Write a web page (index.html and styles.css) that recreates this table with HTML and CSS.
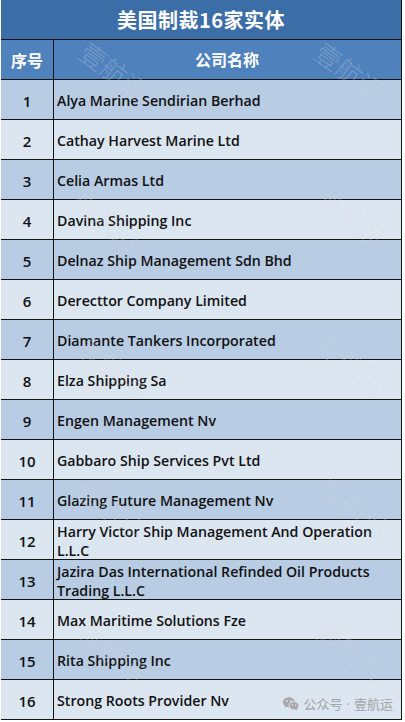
FILE: index.html
```html
<!DOCTYPE html>
<html lang="zh">
<head>
<meta charset="utf-8">
<link rel="stylesheet" href="styles.css">
</head>
<body>
<div class="page">
  <div class="sheet">
    <div class="title">美国制裁16家实体</div>
    <div class="row head"><div class="num">序号</div><div class="name">公司名称</div></div>
    <div class="row odd"><div class="num">1</div><div class="name">Alya Marine Sendirian Berhad</div></div>
    <div class="row even"><div class="num">2</div><div class="name">Cathay Harvest Marine Ltd</div></div>
    <div class="row odd"><div class="num">3</div><div class="name">Celia Armas Ltd</div></div>
    <div class="row even"><div class="num">4</div><div class="name">Davina Shipping Inc</div></div>
    <div class="row odd"><div class="num">5</div><div class="name">Delnaz Ship Management Sdn Bhd</div></div>
    <div class="row even"><div class="num">6</div><div class="name">Derecttor Company Limited</div></div>
    <div class="row odd"><div class="num">7</div><div class="name">Diamante Tankers Incorporated</div></div>
    <div class="row even"><div class="num">8</div><div class="name">Elza Shipping Sa</div></div>
    <div class="row odd"><div class="num">9</div><div class="name">Engen Management Nv</div></div>
    <div class="row even"><div class="num">10</div><div class="name">Gabbaro Ship Services Pvt Ltd</div></div>
    <div class="row odd"><div class="num">11</div><div class="name">Glazing Future Management Nv</div></div>
    <div class="row even"><div class="num">12</div><div class="name">Harry Victor Ship Management And Operation L.L.C</div></div>
    <div class="row odd"><div class="num">13</div><div class="name">Jazira Das International Refinded Oil Products Trading L.L.C</div></div>
    <div class="row even"><div class="num">14</div><div class="name">Max Maritime Solutions Fze</div></div>
    <div class="row odd"><div class="num">15</div><div class="name">Rita Shipping Inc</div></div>
    <div class="row even"><div class="num">16</div><div class="name">Strong Roots Provider Nv</div></div>
  </div>

  <div class="wm wm-l1">壹航运</div>
  <div class="wm wm-r1">壹航运</div>
  <div class="wm wm-l2">壹航运</div>
  <div class="wm wm-r2">壹航运</div>
  <div class="wm wm-l3">壹航运</div>
  <div class="wm wm-r3">壹航运</div>
  <div class="wm wm-l4">壹航运</div>
  <div class="wm wm-r4">壹航运</div>
  <div class="wm wm-l5">壹航运</div>
  <div class="wm wm-r5">壹航运</div>

  <div class="source">
    <svg class="wechat" viewBox="0 0 16 14" width="16" height="14">
      <ellipse cx="6" cy="5.2" rx="6" ry="5" fill="#a9a9a9"/>
      <path d="M2.2 8.6 L1.6 11 L4.3 9.6 Z" fill="#a9a9a9"/>
      <ellipse cx="11" cy="8.8" rx="5" ry="4.2" fill="#a9a9a9" stroke="#dce6f1" stroke-width="1"/>
      <path d="M13.6 11.8 L14.4 13.6 L11.8 12.6 Z" fill="#a9a9a9"/>
      <circle cx="4" cy="4" r="0.9" fill="#dce6f1"/>
      <circle cx="8" cy="4" r="0.9" fill="#dce6f1"/>
      <circle cx="9.4" cy="8" r="0.7" fill="#dce6f1"/>
      <circle cx="12.6" cy="8" r="0.7" fill="#dce6f1"/>
    </svg>
    <span>公众号</span><span class="dot">·</span><span>壹航运</span>
  </div>
</div>
</body>
</html>
```

FILE: styles.css
```css
* { box-sizing: border-box; }
html, body { margin: 0; padding: 0; background: #ffffff; }
body {
  font-family: "Open Sans", "Noto Sans CJK SC", sans-serif;
  color: #111;
}
.page {
  position: relative;
  width: 405px;
  height: 722px;
  overflow: hidden;
}
.sheet {
  margin-left: 1px;
  width: 401px;
  border-right: 1px solid #141414;
}
.title {
  height: 40px;
  background: #3b6da6;
  border-bottom: 1px solid #141414;
  color: #fff;
  font-family: "Noto Sans CJK SC", sans-serif;
  font-weight: 700;
  font-size: 20px;
  display: flex;
  align-items: center;
  justify-content: center;
  letter-spacing: 0.5px;
}
.row {
  display: flex;
  height: 40px;
  border-bottom: 1px solid #141414;
}
.row.odd { background: #b8cce4; }
.row.even { background: #dce6f1; }
.row.head { background: #4f81bd; color: #fff; }
.num {
  width: 53px;
  flex: none;
  border-right: 1px solid #141414;
  display: flex;
  align-items: center;
  justify-content: center;
  font-weight: 600;
  font-size: 15px;
  padding-top: 2px;
}
.name {
  flex: 1;
  display: flex;
  align-items: center;
  padding: 2px 4px 0 3px;
  font-weight: 600;
  font-size: 14.2px;
  line-height: 19px;
}
.head .num, .head .name {
  font-family: "Noto Sans CJK SC", sans-serif;
  font-size: 16px;
  font-weight: 700;
  padding-top: 0;
}
.head .name { justify-content: center; }

.wm {
  position: absolute;
  font-family: "Noto Sans CJK SC", sans-serif;
  font-weight: 200;
  font-size: 26px;
  line-height: 26px;
  color: rgba(215, 218, 224, 0.3);
  transform: rotate(36deg);
  transform-origin: center center;
  pointer-events: none;
  white-space: nowrap;
}
.wm-l1 { left: 76px; top: 58px; }
.wm-r1 { left: 311px; top: 58px; }
.wm-l2 { left: 68px; top: 208px; }
.wm-r2 { left: 313px; top: 205px; }
.wm-l3 { left: 73px; top: 353px; }
.wm-r3 { left: 313px; top: 350px; }
.wm-l4 { left: 73px; top: 497px; }
.wm-r4 { left: 316px; top: 495px; }
.wm-l5 { left: 73px; top: 640px; }
.wm-r5 { left: 312px; top: 637px; }

.source {
  position: absolute;
  right: 12px;
  top: 696px;
  display: flex;
  align-items: center;
  font-family: "Noto Sans CJK SC", sans-serif;
  font-size: 13px;
  line-height: 16px;
  color: #a3a3a3;
}
.wechat { display: block; margin-right: 5px; }
.dot {
  font-family: "Open Sans", sans-serif;
  margin: 0 4px;
}
```
